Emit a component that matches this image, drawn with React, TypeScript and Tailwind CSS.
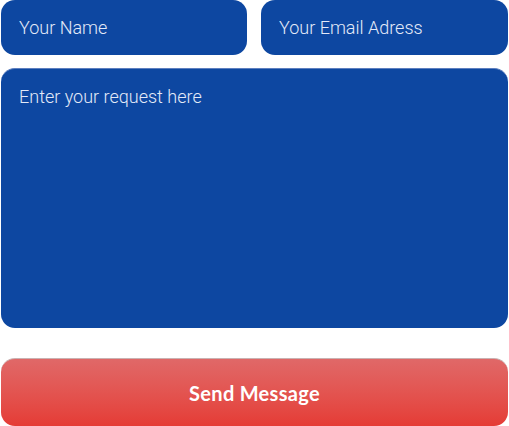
import React from 'react';

export default function App() {
  return (
    <div className="w-[509px] h-[426px] bg-white px-px font-['Roboto',sans-serif] overflow-hidden">
      <form className="flex flex-col" onSubmit={(e) => e.preventDefault()}>
        <div className="flex gap-[14px]">
          <input
            type="text"
            placeholder="Your Name"
            className="w-[246px] min-w-0 h-[55px] rounded-[14px] bg-[#0d47a1] px-[18px] text-[18px] font-light text-white placeholder:text-[#e3eaf8] outline-none"
          />
          <input
            type="email"
            placeholder="Your Email Adress"
            className="flex-1 min-w-0 h-[55px] rounded-[14px] bg-[#0d47a1] px-[18px] text-[18px] font-light text-white placeholder:text-[#e3eaf8] outline-none"
          />
        </div>
        <textarea
          placeholder="Enter your request here"
          className="mt-[13px] h-[260px] rounded-[14px] bg-[#0d47a1] px-[18px] pt-[14px] pb-3 text-[18px] font-light text-white placeholder:text-[#e3eaf8] outline-none resize-none border-t border-[#5d7fbf]"
        />
        <button
          type="submit"
          className="mt-[30px] h-[68px] rounded-[14px] bg-gradient-to-b from-[#e06868] to-[#e53b35] border-t border-[#c9b1b1] text-white text-[20px] font-bold font-['Lato',sans-serif] tracking-[0.3px]"
        >
          Send Message
        </button>
      </form>
    </div>
  );
}
